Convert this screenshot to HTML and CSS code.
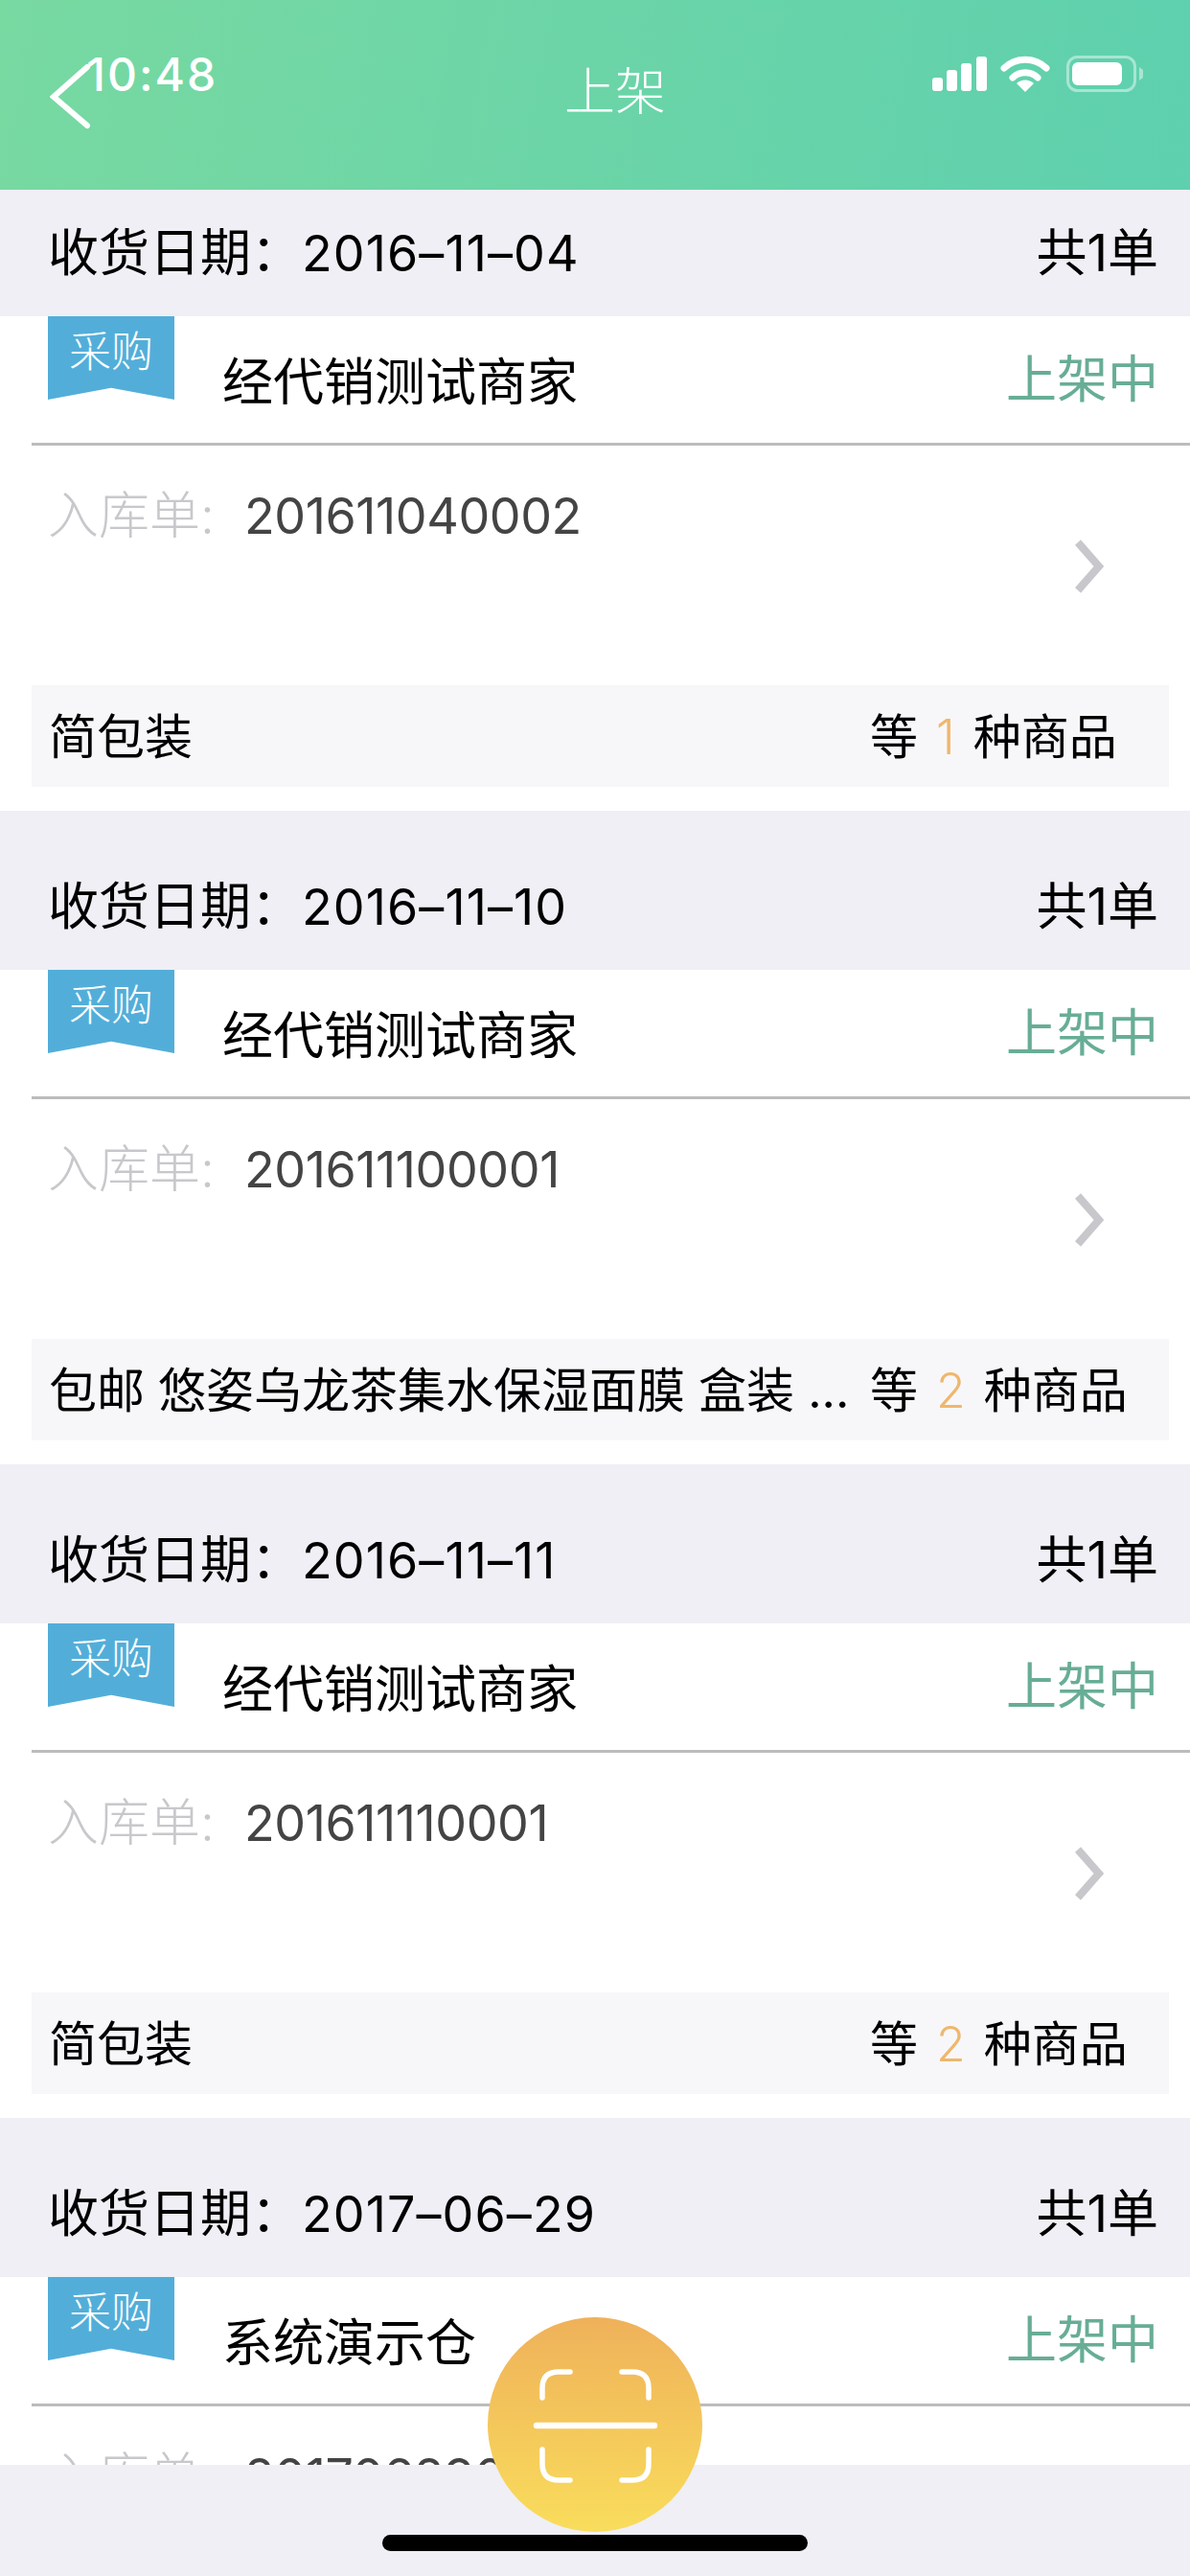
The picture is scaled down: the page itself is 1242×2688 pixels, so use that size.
FILE: index.html
```html
<!DOCTYPE html>
<html lang="zh-CN">
<head>
  <meta charset="UTF-8">
  <title>上架</title>
  <link rel="stylesheet" href="styles.css">
</head>
<body>
  <div class="app">
    <header class="navbar">
      <div class="status-bar">
        <span class="time">10:48</span>
        <svg class="status-icons" width="222" height="40" viewBox="0 0 222 40">
          <rect x="0" y="23" width="11" height="14" rx="3" fill="#fff"/>
          <rect x="15" y="15" width="11" height="22" rx="3" fill="#fff"/>
          <rect x="30" y="8" width="11" height="29" rx="3" fill="#fff"/>
          <rect x="46" y="1" width="11" height="36" rx="3" fill="#fff"/>
          <path d="M75 13a32 32 0 0 1 44 0" fill="none" stroke="#fff" stroke-width="7" stroke-linecap="round"/>
          <path d="M84 23a19 19 0 0 1 26 0" fill="none" stroke="#fff" stroke-width="7" stroke-linecap="round"/>
          <path d="M88 29a13 13 0 0 1 18 0l-9 9z" fill="#fff"/>
          <rect x="141.500" y="1.500" width="70" height="35" rx="10" fill="none" stroke="#fff" stroke-opacity=".45" stroke-width="3"/>
          <rect x="146" y="7" width="52" height="24" rx="6" fill="#fff"/>
          <path d="M216 12l4 3v8l-4 3z" fill="#fff" fill-opacity=".45"/>
        </svg>
      </div>
      <svg class="back" width="44" height="72" viewBox="0 0 44 72">
        <path d="M39 5L4 36l35 30" fill="none" stroke="#fff" stroke-width="6" stroke-linecap="round"/>
      </svg>
      <h1 class="title">上架</h1>
    </header>

    <main class="list">
      <div class="list-inner">
        <section class="group">
          <div class="group-head"><span>收货日期：<b class="date">2016–11–04</b></span><span>共<b>1</b>单</span></div>
          <div class="card">
            <div class="card-top">
              <span class="ribbon">采购</span>
              <span class="supplier">经代销测试商家</span>
              <span class="state">上架中</span>
            </div>
            <div class="card-mid">
              <span class="order"><i>入库单:</i><b class="num">201611040002</b></span>
              <svg class="arrow" width="32" height="56" viewBox="0 0 32 56"><path d="M5 3l22 25L5 53" fill="none" stroke="#c7c7cc" stroke-width="8"/></svg>
            </div>
            <div class="goods"><span class="goods-name">简包装</span><span class="goods-count">等<em>1</em>种商品</span></div>
          </div>
        </section>

        <section class="group">
          <div class="group-head"><span>收货日期：<b class="date">2016–11–10</b></span><span>共<b>1</b>单</span></div>
          <div class="card">
            <div class="card-top">
              <span class="ribbon">采购</span>
              <span class="supplier">经代销测试商家</span>
              <span class="state">上架中</span>
            </div>
            <div class="card-mid">
              <span class="order"><i>入库单:</i><b class="num">201611100001</b></span>
              <svg class="arrow" width="32" height="56" viewBox="0 0 32 56"><path d="M5 3l22 25L5 53" fill="none" stroke="#c7c7cc" stroke-width="8"/></svg>
            </div>
            <div class="goods"><span class="goods-name">包邮 悠姿乌龙茶集水保湿面膜 盒装 ...</span><span class="goods-count">等<em>2</em>种商品</span></div>
          </div>
        </section>

        <section class="group">
          <div class="group-head"><span>收货日期：<b class="date">2016–11–11</b></span><span>共<b>1</b>单</span></div>
          <div class="card">
            <div class="card-top">
              <span class="ribbon">采购</span>
              <span class="supplier">经代销测试商家</span>
              <span class="state">上架中</span>
            </div>
            <div class="card-mid">
              <span class="order"><i>入库单:</i><b class="num">201611110001</b></span>
              <svg class="arrow" width="32" height="56" viewBox="0 0 32 56"><path d="M5 3l22 25L5 53" fill="none" stroke="#c7c7cc" stroke-width="8"/></svg>
            </div>
            <div class="goods"><span class="goods-name">简包装</span><span class="goods-count">等<em>2</em>种商品</span></div>
          </div>
        </section>

        <section class="group">
          <div class="group-head"><span>收货日期：<b class="date">2017–06–29</b></span><span>共<b>1</b>单</span></div>
          <div class="card">
            <div class="card-top">
              <span class="ribbon">采购</span>
              <span class="supplier">系统演示仓</span>
              <span class="state">上架中</span>
            </div>
            <div class="card-mid">
              <span class="order"><i>入库单:</i><b class="num">201706290001</b></span>
            </div>
          </div>
        </section>
      </div>
    </main>

    <footer class="bottom-bar">
      <div class="home-bar"></div>
    </footer>

    <button class="scan-btn">
      <svg width="140" height="130" viewBox="0 0 140 130">
        <path d="M44 10H32Q15 10 15 27V37M98 10h11Q126 10 126 27V37M15 91v15Q15 123 32 123H44M126 91v15Q126 123 109 123H98" fill="none" stroke="#fff" stroke-width="5.500" stroke-linecap="round"/>
        <path d="M9 66H132" fill="none" stroke="#fff" stroke-width="6.500" stroke-linecap="round"/>
      </svg>
    </button>
  </div>
</body>
</html>
```

FILE: styles.css
```css
* {
  box-sizing: border-box;
}
body {
  margin: 0;
  font-family: 'Inter', 'Noto Sans CJK SC', sans-serif;
  font-weight: 400;
  color: #000;
  background-color: #fff;
}
b, i, em {
  font-weight: inherit;
  font-style: normal;
}
.app {
  position: relative;
  width: 1242px;
  height: 2688px;
  display: flex;
  flex-direction: column;
  overflow: hidden;
}

/* nav */
.navbar {
  position: relative;
  flex: 0 0 198px;
  background: linear-gradient(100deg, #78d9a1, #5ed0ae);
  color: #fff;
  text-align: center;
}
.status-bar {
  position: absolute;
  top: 52px;
  left: 90px;
  right: 47px;
  display: flex;
  justify-content: space-between;
  align-items: center;
}
.time {
  font-size: 48px;
  font-weight: 500;
  line-height: 52px;
  letter-spacing: 2px;
}
.status-icons {
  display: block;
}
.back {
  position: absolute;
  top: 65px;
  left: 52px;
}
.title {
  margin: 0;
  padding: 60px 0 0 42px;
  font-size: 53px;
  font-weight: 300;
  line-height: 72px;
}

/* list */
.list {
  flex: 1;
  overflow: hidden;
  min-height: 0;
}
.list-inner {
  margin-top: -34px;
}
.group-head {
  height: 166px;
  padding: 65px 33px 0 50px;
  display: flex;
  justify-content: space-between;
  background-color: #efeff5;
  font-size: 53px;
  line-height: 70px;
}
.date {
  font-size: 52px;
  letter-spacing: 1.100px;
}
.card {
  height: 516px;
  background-color: #fff;
}
.card-top {
  height: 135px;
  margin-left: 33px;
  padding-right: 33px;
  display: flex;
  align-items: flex-start;
  border-bottom: 3px solid #bcbcbc;
}
.ribbon {
  flex: 0 0 132px;
  height: 87px;
  margin-left: 17px;
  padding-top: 12px;
  background-color: #52aed9;
  clip-path: polygon(0 0, 100% 0, 100% 100%, 50% 86%, 0 100%);
  color: #fff;
  font-size: 44px;
  font-weight: 300;
  line-height: 50px;
  text-align: center;
}
.supplier {
  flex: 1;
  margin-left: 50px;
  padding-top: 33px;
  font-size: 53px;
  line-height: 72px;
}
.state {
  padding-top: 30px;
  font-size: 53px;
  line-height: 72px;
  color: #68ad96;
}
.card-mid {
  height: 250px;
  padding: 38px 90px 0 50px;
  display: flex;
  justify-content: space-between;
  align-items: flex-start;
}
.order {
  font-size: 53px;
  line-height: 70px;
}
.order i {
  font-weight: 300;
  color: #c8c8cc;
}
.num {
  margin-left: 31px;
  font-size: 52px;
  letter-spacing: -0.400px;
  color: #444;
}
.arrow {
  margin-top: 60px;
}
.goods {
  height: 106px;
  margin: 0 22px 0 33px;
  padding: 0 0 7px 18px;
  display: flex;
  align-items: center;
  background-color: #f7f7fa;
  font-size: 50px;
}
.goods-name {
  width: 857px;
  flex: none;
  white-space: nowrap;
  overflow: hidden;
}
.goods-count {
  white-space: nowrap;
}
.goods-count em {
  margin: 0 19px;
  font-weight: 300;
  color: #efb76c;
}

/* bottom */
.bottom-bar {
  flex: 0 0 116px;
  padding-top: 73px;
  background-color: #efeff5;
}
.home-bar {
  width: 444px;
  height: 17px;
  margin: 0 auto;
  border-radius: 9px;
  background-color: #000;
}
.scan-btn {
  position: absolute;
  left: 509px;
  top: 2418px;
  width: 224px;
  height: 224px;
  padding: 0;
  border: none;
  border-radius: 50%;
  display: flex;
  align-items: center;
  justify-content: center;
  background: linear-gradient(180deg, #efb15a, #f9dd5c);
}
```
